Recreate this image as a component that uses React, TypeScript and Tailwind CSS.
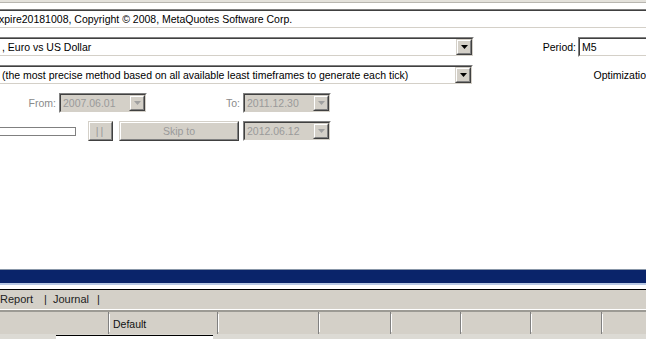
import type { ReactNode } from "react";

function Sunken({ className = "", inner = "", children }: { className?: string; inner?: string; children?: ReactNode }) {
    return (
        <div className={`border border-t-[#808080] border-l-[#808080] border-b-white border-r-white ${className}`}>
            <div className={`h-full border border-t-[#404040] border-l-[#404040] border-b-[#d4d0c8] border-r-[#d4d0c8] ${inner}`}>
                {children}
            </div>
        </div>
    );
}

function Raised({ className = "", inner = "", children }: { className?: string; inner?: string; children?: ReactNode }) {
    return (
        <div className={`border border-t-[#d4d0c8] border-l-[#d4d0c8] border-b-[#404040] border-r-[#404040] bg-[#d4d0c8] ${className}`}>
            <div className={`h-full border border-t-white border-l-white border-b-[#808080] border-r-[#808080] flex items-center justify-center ${inner}`}>
                {children}
            </div>
        </div>
    );
}

function Arrow({ disabled = false }: { disabled?: boolean }) {
    return (
        <Raised className="w-[16px] h-[16px] shrink-0">
            <svg width="7" height="4" viewBox="0 0 7 4">
                <polygon points="0,0 7,0 3.5,4" fill={disabled ? "#a0a0a0" : "#000"} />
            </svg>
        </Raised>
    );
}

function Combo({ text, className = "", disabled = false }: { text: string; className?: string; disabled?: boolean }) {
    return (
        <Sunken className={`h-[20px] ${className}`} inner={disabled ? "bg-[#d4d0c8] flex items-center" : "bg-white flex items-center"}>
            <span className={`flex-1 pl-[2px] whitespace-nowrap overflow-hidden ${disabled ? "text-[#9a9a9a]" : "text-black"}`}>{text}</span>
            <Arrow disabled={disabled} />
        </Sunken>
    );
}

export default function App() {
    const cols = [109, 109, 101, 72, 70, 70, 71];

    return (
        <div className="w-[646px] h-[339px] overflow-hidden bg-white relative text-[10.5px] leading-[13px] text-black font-['Liberation_Sans',Arial,sans-serif]">
            {/* cima */}
            <div className="h-[3px] bg-[#e4e2dc] border-b border-[#b8b6b0]" />

            <div className="flex flex-col gap-[8px] pt-[6px]">
                <Sunken className="h-[20px] border-l-0 -ml-[2px] -mr-[4px]" inner="bg-white flex items-center border-l-0">
                    <span className="pl-[1px] whitespace-nowrap">xpire20181008, Copyright © 2008, MetaQuotes Software Corp.</span>
                </Sunken>

                <div className="flex items-center">
                    <Combo text=", Euro vs US Dollar" className="w-[475px] border-l-0 -ml-[1px]" />
                    <span className="ml-auto mr-[2px]">Period:</span>
                    <Sunken className="h-[20px] w-[80px] -mr-[12px]" inner="bg-white flex items-center">
                        <span className="pl-[2px]">M5</span>
                    </Sunken>
                </div>

                <div className="flex items-center">
                    <Combo text=" (the most precise method based on all available least timeframes to generate each tick)" className="w-[475px] border-l-0 -ml-[1px]" />
                    <span className="ml-[120px] whitespace-nowrap">Optimizatio</span>
                </div>

                <div className="flex items-center h-[20px]">
                    <span className="w-[56px] text-right text-[#8a8a8a] mr-[3px]">From:</span>
                    <Combo text="2007.06.01" disabled className="w-[88px]" />
                    <span className="w-[93px] text-right text-[#8a8a8a] mr-[3px]">To:</span>
                    <Combo text="2011.12.30" disabled className="w-[88px]" />
                </div>

                <div className="flex items-center h-[20px]">
                    <div className="w-[76px] h-[9px] border border-[#808080] border-l-0 bg-white" />
                    <Raised className="w-[25px] h-[20px] ml-[12px]">
                        <span className="text-[#9a9a9a] tracking-[2px]">||</span>
                    </Raised>
                    <Raised className="w-[120px] h-[20px] ml-[6px]">
                        <span className="text-[#9a9a9a]">Skip to</span>
                    </Raised>
                    <Combo text="2012.06.12" disabled className="w-[88px] ml-[4px]" />
                </div>
            </div>

            {/* barra inferior */}
            <div className="absolute left-0 right-0 top-[269px] bottom-0 flex flex-col">
                <div className="h-[1px] bg-[#8896a8]" />
                <div className="h-[13px] bg-[#0a246a]" />
                <div className="h-[2px] bg-[#b9c9e4]" />
                <div className="h-[4px] bg-white" />
                <div className="h-[1px] bg-black" />
                <div className="h-[19px] bg-[#d4d0c8] flex items-center text-[11px] text-[#222]">
                    <span>Report</span>
                    <span className="ml-[11px]">|</span>
                    <span className="ml-[6px]">Journal</span>
                    <span className="ml-[8px]">|</span>
                </div>
                <div className="h-[1px] bg-white" />
                <div className="h-[2px] bg-[#9c9a94]" />
                <div className="h-[22px] bg-[#d4d0c8] flex">
                    {cols.map((w, i) => (
                        <div key={i} style={{ width: w }} className="shrink-0 flex items-center border-r border-[#808080] relative">
                            {i === 1 && <span className="pl-[4px] pt-[2px] text-[#111]">Default</span>}
                            <div className="absolute right-[-2px] top-[2px] bottom-[2px] w-[1px] bg-white" />
                        </div>
                    ))}
                </div>
                <div className="flex-1 bg-[#dcdad4] relative">
                    <div className="absolute left-[56px] w-[157px] top-[1px] bottom-0 bg-white border-t border-black" />
                </div>
            </div>
        </div>
    );
}
